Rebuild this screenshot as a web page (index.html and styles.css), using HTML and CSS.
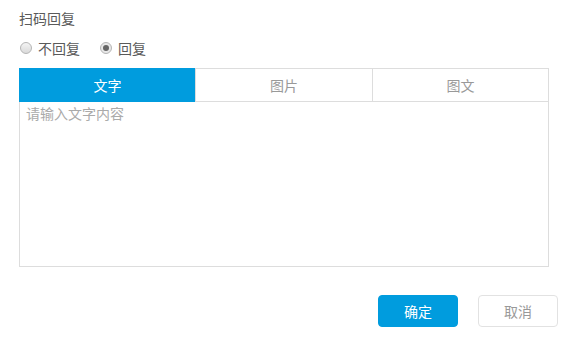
FILE: index.html
```html
<!DOCTYPE html>
<html lang="zh-CN">
<head>
    <meta charset="UTF-8">
    <title>扫码回复</title>
    <link rel="stylesheet" href="styles.css">
</head>
<body>
    <div class="panel">
        <div class="field-title">扫码回复</div>

        <div class="radio-group">
            <label class="radio">
                <span class="radio-dot"></span>
                <span class="radio-label">不回复</span>
            </label>
            <label class="radio is-checked">
                <span class="radio-dot"></span>
                <span class="radio-label">回复</span>
            </label>
        </div>

        <div class="editor">
            <div class="tabs">
                <div class="tab is-active">文字</div>
                <div class="tab">图片</div>
                <div class="tab">图文</div>
            </div>
            <div class="editor-body">
                <span class="placeholder">请输入文字内容</span>
            </div>
        </div>

        <div class="footer">
            <button class="btn btn-primary">确定</button>
            <button class="btn btn-default">取消</button>
        </div>
    </div>
</body>
</html>
```

FILE: styles.css
```css
:root {
    --brand-blue: #009CDE;
    --border-gray: #DDDDDD;
    --text-main: #5A5A5A;
    --text-muted: #999999;
    --text-placeholder: #AAAAAA;
}

body {
    margin: 0;
    padding: 0;
    background-color: #FFFFFF;
    font-family: "Noto Sans CJK SC", "Liberation Sans", sans-serif;
    font-size: 14px;
    color: var(--text-main);
}

.panel {
    padding: 8px 13px 0 19px;
}

.field-title {
    line-height: 20px;
    height: 20px;
}

.radio-group {
    display: flex;
    align-items: center;
    gap: 19px;
    margin-top: 10px;
    height: 20px;
}

.radio {
    display: flex;
    align-items: center;
    gap: 6px;
    cursor: pointer;
}

.radio-dot {
    position: relative;
    width: 12px;
    height: 12px;
    border: 1px solid #B5B5B5;
    border-radius: 50%;
    background: linear-gradient(#F4F4F4, #DADADA);
    box-sizing: border-box;
    margin-left: 1px;
}

.is-checked .radio-dot {
    background: #E8E8E8;
}

.is-checked .radio-dot::after {
    content: "";
    position: absolute;
    left: 2px;
    top: 2px;
    width: 6px;
    height: 6px;
    border-radius: 50%;
    background-color: #666666;
}

.radio-label {
    line-height: 20px;
}

.editor {
    width: 530px;
    margin-top: 10px;
}

.tabs {
    display: flex;
    height: 34px;
}

.tab {
    flex: 0 0 177px;
    display: flex;
    align-items: center;
    justify-content: center;
    border: 1px solid var(--border-gray);
    border-right: none;
    color: var(--text-muted);
    box-sizing: border-box;
    cursor: pointer;
}

.tab:first-child {
    flex-basis: 176px;
}

.tab:last-child {
    border-right: 1px solid var(--border-gray);
}

.tab.is-active {
    background-color: var(--brand-blue);
    border-color: var(--brand-blue);
    color: #FFFFFF;
}

.editor-body {
    height: 165px;
    border: 1px solid var(--border-gray);
    border-top: none;
    box-sizing: border-box;
    padding: 0 6px;
    line-height: 22px;
}

.placeholder {
    color: var(--text-placeholder);
}

.footer {
    display: flex;
    justify-content: flex-end;
    gap: 20px;
    margin-top: 28px;
}

.btn {
    width: 80px;
    height: 32px;
    border-radius: 4px;
    font-family: inherit;
    font-size: 14px;
    cursor: pointer;
    box-sizing: border-box;
}

.btn-primary {
    background-color: var(--brand-blue);
    border: 1px solid var(--brand-blue);
    color: #FFFFFF;
}

.btn-default {
    background-color: #FFFFFF;
    border: 1px solid #E2E2E2;
    color: var(--text-muted);
}
```
